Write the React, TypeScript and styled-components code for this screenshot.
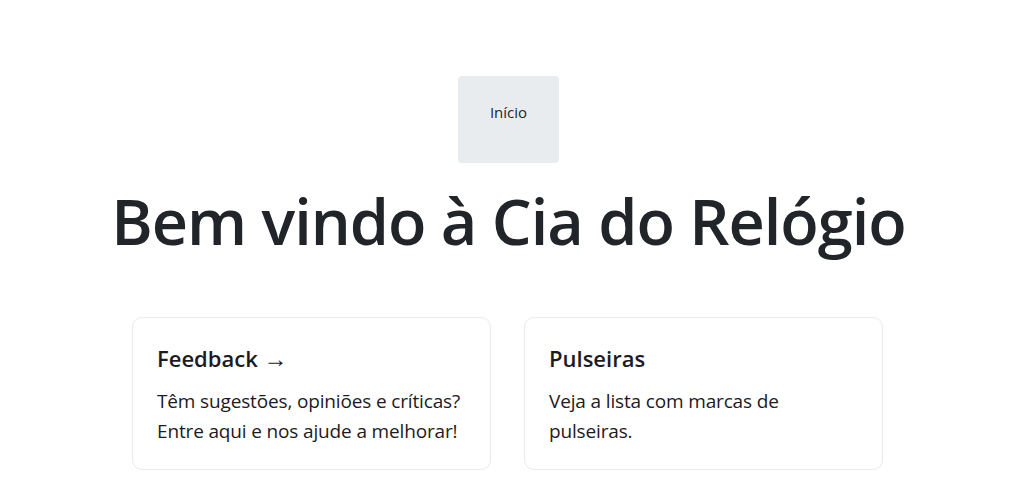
import React from "react";
import styled, { createGlobalStyle } from "styled-components";

const Global = createGlobalStyle`
  html, body { margin: 0; padding: 0; background: #fff; }
  body {
    font-family: "Open Sans", "Noto Sans", sans-serif;
    color: #212529;
  }
`;

const Page = styled.main`
  display: flex;
  flex-direction: column;
  align-items: center;
  padding-top: 76px;
`;

const NavButton = styled.a`
  box-sizing: border-box;
  width: 101px;
  height: 87px;
  padding-top: 24px;
  background: #e9ecef;
  border-radius: 4px;
  text-align: center;
  font-size: 15px;
  line-height: 24px;
  color: #212529;
  text-decoration: none;
`;

const Title = styled.h1`
  margin: 21px 0 0;
  font-size: 63px;
  font-weight: 600;
  line-height: 74px;
  letter-spacing: -1px;
  color: #212529;
`;

const Grid = styled.div`
  display: flex;
  gap: 33px;
  margin-top: 59px;
  margin-left: -2px;
`;

const Card = styled.a`
  box-sizing: border-box;
  width: 359px;
  height: 153px;
  padding: 24px;
  border: 1px solid #eaeaea;
  border-radius: 10px;
  color: #1d1a24;
  text-decoration: none;
`;

const CardTitle = styled.h2`
  margin: 0 0 12px;
  font-size: 22px;
  font-weight: 600;
  line-height: 32px;
  letter-spacing: 0;
`;

const Arrow = styled.span`
  font-size: 24px;
  font-weight: 400;
`;

const CardText = styled.p`
  margin: 0;
  font-size: 19px;
  line-height: 30px;
  letter-spacing: -0.15px;
`;

export default function App() {
  return (
    <>
      <Global />
      <Page>
        <NavButton href="#">Início</NavButton>
        <Title>Bem vindo à Cia do Relógio</Title>
        <Grid>
          <Card href="#">
            <CardTitle>
              Feedback <Arrow>&rarr;</Arrow>
            </CardTitle>
            <CardText>
              Têm sugestões, opiniões e críticas? Entre aqui e nos ajude a melhorar!
            </CardText>
          </Card>
          <Card href="#">
            <CardTitle>Pulseiras</CardTitle>
            <CardText>Veja a lista com marcas de pulseiras.</CardText>
          </Card>
        </Grid>
      </Page>
    </>
  );
}
